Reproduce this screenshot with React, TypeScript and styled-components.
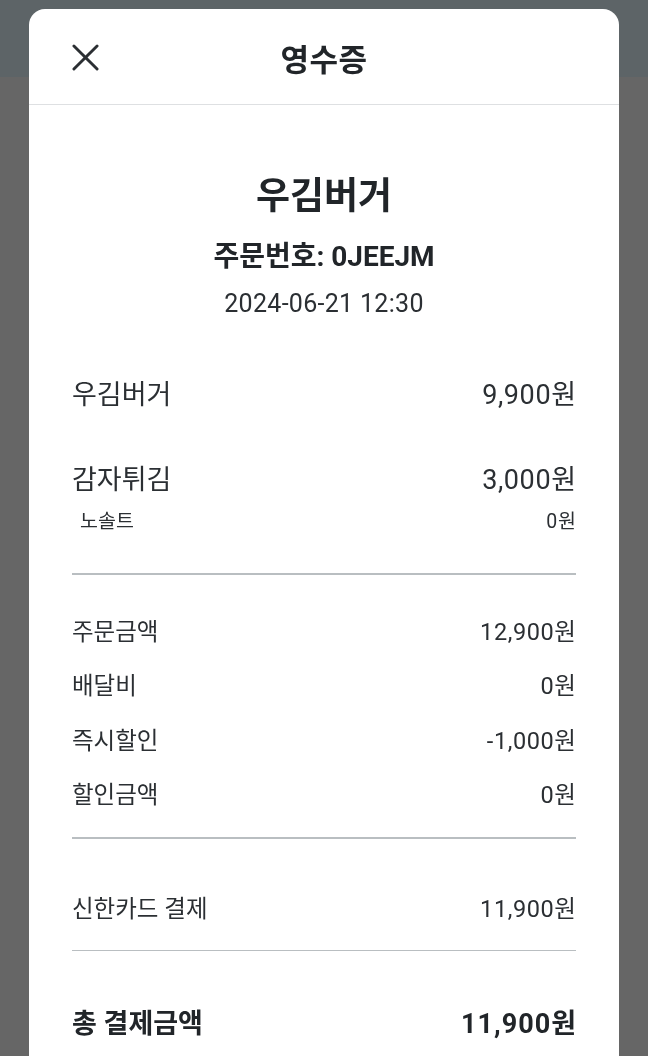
import React, { ReactElement } from 'react'
import styled, { createGlobalStyle } from 'styled-components'

const GlobalStyle = createGlobalStyle`
  html, body {
    margin: 0;
    padding: 0;
    background: #666666;
    font-family: Roboto, 'Noto Sans CJK KR', 'Noto Sans', sans-serif;
    color: #212529;
  }
`

const Page = styled.div`
  min-height: 1056px;
  background: #666666;
`

const AppBar = styled.div`
  height: 77px;
  background: #5d6467;
`

const Modal = styled.div`
  position: fixed;
  top: 9px;
  left: 29px;
  width: 590px;
  bottom: 0;
  background: #ffffff;
  border-radius: 16px 16px 0 0;
  overflow: hidden;
`

const ModalHeader = styled.div`
  height: 95px;
  border-bottom: 1px solid #dee0e2;
  display: flex;
  align-items: center;
  justify-content: center;
  position: relative;
`

const CloseButton = styled.button`
  position: absolute;
  left: 36px;
  top: 28px;
  width: 40px;
  height: 40px;
  padding: 0;
  border: 0;
  background: none;
  display: flex;
  align-items: center;
  justify-content: center;
  color: #2b2f33;
`

const ModalTitle = styled.h1`
  margin: 0;
  font-size: 31px;
  font-weight: 700;
  line-height: 36px;
  padding-top: 8px;
  letter-spacing: 0.5px;
`

const Body = styled.div`
  padding: 0 43px;
`

const StoreBlock = styled.div`
  display: flex;
  flex-direction: column;
  align-items: center;
  padding-top: 70px;
`

const StoreName = styled.div`
  font-size: 37px;
  font-weight: 700;
  line-height: 44px;
`

const OrderNo = styled.div`
  margin-top: 21px;
  font-size: 28px;
  font-weight: 700;
  line-height: 34px;
`

const OrderDate = styled.div`
  margin-top: 15px;
  font-size: 25px;
  line-height: 30px;
  letter-spacing: 0.3px;
  color: #2b2f33;
`

const Section = styled.div<{ $top: number; $bottom: number }>`
  padding-top: ${(p) => p.$top}px;
  padding-bottom: ${(p) => p.$bottom}px;
  display: flex;
  flex-direction: column;
`

const Divider = styled.hr`
  margin: 0;
  border: 0;
  height: 1.5px;
  background: #b9bec1;
`

type RowKind = 'item' | 'option' | 'summary' | 'total'

const sizes: Record<RowKind, { font: number; line: number; weight: number; spacing: number }> = {
  item: { font: 27, line: 34, weight: 400, spacing: 0.6 },
  option: { font: 19.5, line: 26, weight: 400, spacing: 0.8 },
  summary: { font: 23.5, line: 30, weight: 400, spacing: 0.6 },
  total: { font: 27, line: 36, weight: 700, spacing: 1 },
}

const Row = styled.div<{ $kind: RowKind; $gap: number }>`
  display: flex;
  justify-content: space-between;
  align-items: center;
  margin-top: ${(p) => p.$gap}px;
  font-size: ${(p) => sizes[p.$kind].font}px;
  line-height: ${(p) => sizes[p.$kind].line}px;
  font-weight: ${(p) => sizes[p.$kind].weight};
  padding-left: ${(p) => (p.$kind === 'option' ? 8 : 0)}px;
  color: ${(p) => (p.$kind === 'total' ? '#212529' : '#2b2f33')};
`

const Amount = styled.span<{ $kind: RowKind }>`
  letter-spacing: ${(p) => sizes[p.$kind].spacing}px;
  margin-right: -${(p) => sizes[p.$kind].spacing}px;
`

function XIcon(): ReactElement {
  return (
    <svg width="27" height="27" viewBox="0 0 28 28" fill="none">
      <path d="M2 2L26 26M26 2L2 26" stroke="currentColor" strokeWidth="3" strokeLinecap="round" />
    </svg>
  )
}

const summary = [
  ['주문금액', '12,900원'],
  ['배달비', '0원'],
  ['즉시할인', '-1,000원'],
  ['할인금액', '0원'],
]

function App(): ReactElement {
  return (
    <Page>
      <GlobalStyle />
      <AppBar />
      <Modal>
        <ModalHeader>
          <CloseButton aria-label="닫기">
            <XIcon />
          </CloseButton>
          <ModalTitle>영수증</ModalTitle>
        </ModalHeader>
        <Body>
          <StoreBlock>
            <StoreName>우김버거</StoreName>
            <OrderNo>주문번호: 0JEEJM</OrderNo>
            <OrderDate>2024-06-21 12:30</OrderDate>
          </StoreBlock>
          <Section $top={59} $bottom={38}>
            <Row $kind="item" $gap={0}>
              <span>우김버거</span>
              <Amount $kind="item">9,900원</Amount>
            </Row>
            <Row $kind="item" $gap={51}>
              <span>감자튀김</span>
              <Amount $kind="item">3,000원</Amount>
            </Row>
            <Row $kind="option" $gap={12}>
              <span>노솔트</span>
              <Amount $kind="option">0원</Amount>
            </Row>
          </Section>
          <Divider />
          <Section $top={42} $bottom={27}>
            {summary.map(([label, value], i) => (
              <Row key={label} $kind="summary" $gap={i === 0 ? 0 : 24.5}>
                <span>{label}</span>
                <Amount $kind="summary">{value}</Amount>
              </Row>
            ))}
          </Section>
          <Divider />
          <Section $top={55} $bottom={26}>
            <Row $kind="summary" $gap={0}>
              <span>신한카드 결제</span>
              <Amount $kind="summary">11,900원</Amount>
            </Row>
          </Section>
          <Divider />
          <Section $top={55} $bottom={30}>
            <Row $kind="total" $gap={0}>
              <span>총 결제금액</span>
              <Amount $kind="total">11,900원</Amount>
            </Row>
          </Section>
        </Body>
      </Modal>
    </Page>
  )
}

export default App
